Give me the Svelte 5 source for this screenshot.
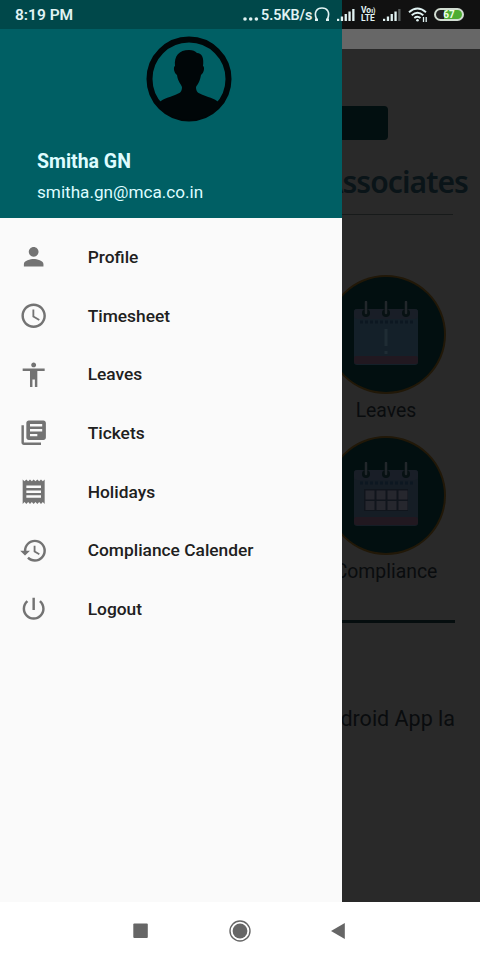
<script>
  const items = [
    { label: 'Profile', d: 'M12 12c2.21 0 4-1.79 4-4s-1.79-4-4-4-4 1.79-4 4 1.79 4 4 4zm0 2c-2.67 0-8 1.34-8 4v2h16v-2c0-2.66-5.33-4-8-4z' },
    { label: 'Timesheet', d: 'M11.99 2C6.47 2 2 6.48 2 12s4.47 10 9.99 10C17.52 22 22 17.52 22 12S17.52 2 11.99 2zM12 20c-4.42 0-8-3.58-8-8s3.58-8 8-8 8 3.58 8 8-3.58 8-8 8zm.5-13H11v6l5.25 3.15.75-1.23-4.5-2.67z' },
    { label: 'Leaves', d: 'M12 2c1.1 0 2 .9 2 2s-.9 2-2 2-2-.9-2-2 .9-2 2-2zm9 7h-6v13h-2v-6h-2v6H9V9H3V7h18v2z' },
    { label: 'Tickets', d: 'M4 6H2v14c0 1.1.9 2 2 2h14v-2H4V6zm16-4H8c-1.1 0-2 .9-2 2v12c0 1.1.9 2 2 2h12c1.1 0 2-.9 2-2V4c0-1.1-.9-2-2-2zm-1 9H9V9h10v2zm-4 4H9v-2h6v2zm4-8H9V5h10v2z' },
    { label: 'Holidays', d: 'M18 17H6v-2h12v2zm0-4H6v-2h12v2zm0-4H6V7h12v2zM3 22l1.5-1.5L6 22l1.5-1.5L9 22l1.5-1.5L12 22l1.5-1.5L15 22l1.5-1.5L18 22l1.5-1.5L21 22V2l-1.5 1.5L18 2l-1.5 1.5L15 2l-1.5 1.5L12 2l-1.5 1.5L9 2 7.5 3.5 6 2 4.5 3.5 3 2v20z' },
    { label: 'Compliance Calender', d: 'M13 3a9 9 0 0 0-9 9H1l3.89 3.89.07.14L9 12H6c0-3.87 3.13-7 7-7s7 3.13 7 7-3.13 7-7 7c-1.93 0-3.68-.79-4.94-2.06l-1.42 1.42A8.954 8.954 0 0 0 13 21a9 9 0 0 0 0-18zm-1 5v5l4.28 2.54.72-1.21-3.5-2.08V8H12z' },
    { label: 'Logout', d: 'M13 3h-2v10h2V3zm4.83 2.17l-1.42 1.42C17.99 7.86 19 9.81 19 12c0 3.87-3.13 7-7 7s-7-3.13-7-7c0-2.19 1.01-4.14 2.58-5.42L6.17 5.17C4.23 6.82 3 9.26 3 12a9 9 0 0 0 18 0c0-2.74-1.23-5.18-3.17-6.83z' }
  ];
</script>

{#snippet signal(weak)}
  <svg class="signal" width="18" height="13" viewBox="0 0 18 13" fill="currentColor">
    <rect x="0" y="10.8" width="2.2" height="2.2" /><rect x="3.8" y="8.5" width="2.3" height="4.5" />
    <rect x="7.6" y="6" width="2.3" height="7" /><rect x="11.4" y="3.5" width="2.3" height="9.5" />
    <rect x="15.2" y="1" width="2.3" height="12" opacity={weak ? 0.35 : 1} />
  </svg>
{/snippet}

{#snippet calendar(grid)}
  <svg width="66" height="67" viewBox="0 0 66 67">
    <rect x="1" y="8" width="64" height="56" rx="3" fill={grid ? '#151d25' : '#142029'} />
    <rect x="1" y="8" width="64" height="10" rx="3" fill="#191e27" />
    <rect x="1" y="55" width="64" height="8" rx="2" fill="#211820" />
    <path d="M7 21H60" stroke="#0c1721" stroke-width="3" stroke-dasharray="3 2" />
    <g fill="#071113"><circle cx="13" cy="12" r="4" /><circle cx="33" cy="12" r="4" /><circle cx="53" cy="12" r="4" /></g>
    <path d="M13 1V12M33 1V12M53 1V12" stroke="#22272b" stroke-width="2.5" stroke-linecap="round" />
    {#if grid}
      <rect x="11" y="27" width="44" height="22" fill="#10151c" />
      {#each [0, 1, 2, 3] as c}
        <rect x={12.5 + c * 11} y="28.5" width="9" height="9" fill="#26272e" />
        <rect x={12.5 + c * 11} y="39" width="9" height="9" fill="#26272e" />
      {/each}
    {:else}
      <path d="M33 28V45M33 50V53" stroke="#1f2c34" stroke-width="3" />
    {/if}
  </svg>
{/snippet}

<div class="screen">
  <main>
    <div class="toolbar"></div>
    <div class="button"></div>
    <h1>Associates</h1>
    <hr class="thin" />
    <section>
      <div class="tile"><div class="disc">{@render calendar(false)}</div><span>Leaves</span></div>
      <div class="tile"><div class="disc">{@render calendar(true)}</div><span>Compliance</span></div>
    </section>
    <hr class="thick" />
    <p>Android App la</p>
  </main>

  <aside>
    <header>
      <svg class="avatar" width="86" height="86" viewBox="0 0 86 86">
        <circle cx="43" cy="43" r="39.5" fill="none" stroke="#000608" stroke-width="6" />
        <path d="M43 14C33 14 28 20 29 30C27 31 28 37 31 39C32 46 35 48 36 51C36 56 34 57 29 59C22 62 15 63 12 68C20 79 31 84 43 84S66 79 74 68C71 63 64 62 57 59C52 57 50 56 50 51C52 48 54 45 55 39C58 37 59 31 57 30C58 22 56 17 51 17C49 15 47 14 43 14Z" fill="#000608" />
      </svg>
      <strong>Smitha GN</strong>
      <span>smitha.gn@mca.co.in</span>
    </header>
    <nav>
      {#each items as item}
        <a href="#top">
          <svg width="29.33" height="29.33" viewBox="0 0 24 24" fill="#737373"><path d={item.d} /></svg>
          <span>{item.label}</span>
        </a>
      {/each}
    </nav>
  </aside>

  <div class="status">
    <time>8:19 PM</time>
    <div class="indicators">
      <svg class="dots" width="16" height="4" viewBox="0 0 16 4" fill="currentColor"><circle cx="2" cy="2" r="1.8" /><circle cx="7.7" cy="2" r="1.8" /><circle cx="13.4" cy="2" r="1.8" /></svg>
      <b>5.5KB/s</b>
      <svg class="phones" width="16" height="15" viewBox="0 0 16 15" fill="none" stroke="currentColor" stroke-width="1.6"><path d="M2.5 12C-.5 5 3 1 8 1S16.5 5 13.5 12" /><path d="M1 12.8H4M12 12.8H15" stroke-width="2.6" /></svg>
      {@render signal(false)}
      <span class="volte"><i>Vo<small>ı)</small></i><i>LTE</i></span>
      {@render signal(true)}
      <svg class="wifi" width="20" height="16" viewBox="0 0 20 16" fill="none" stroke="currentColor" stroke-width="1.9"><path d="M1 5.2Q9.5-2.2 18 5.2M3.7 8.2Q9.5 3.2 15.3 8.2M6.3 11Q9.5 8.5 12.5 11" /><circle cx="9.5" cy="13.3" r="1.3" fill="currentColor" stroke="none" /><path d="M15.5 10V15M18.2 10V15" stroke-width="1.3" /></svg>
      <span class="battery"><em>67</em></span>
    </div>
  </div>

  <footer>
    <svg width="480" height="58" viewBox="0 0 480 58" fill="#666">
      <rect x="133.3" y="21.5" width="14.5" height="14.5" rx="1" />
      <circle cx="240" cy="29" r="7.4" />
      <circle cx="240" cy="29" r="10" fill="none" stroke="#666" stroke-width="1.4" />
      <path d="M331 29L344.8 21V37Z" />
    </svg>
  </footer>
</div>

<style>
  :global(body) { margin: 0; }
  .screen { position: relative; width: 480px; height: 960px; overflow: hidden; display: flex; flex-direction: column; font-family: Roboto, sans-serif; background: #292929; }
  main { box-sizing: border-box; height: 902px; padding-top: 29px; display: flex; flex-direction: column; flex: none; color: #090c0e; }
  .toolbar { height: 20px; background: #676767; }
  .button { width: 296px; height: 34px; margin: 57px auto 0 92px; border-radius: 4px; background: #020f10; }
  h1 { margin: 22px 12px 0 0; height: 40px; text-align: right; font: 600 30px/40px "Noto Sans", sans-serif; letter-spacing: -0.9px; color: #0a1418; }
  hr { border: 0; margin: 0; width: 428px; flex: none; }
  .thin { height: 1px; margin: 12px 0 0 25px; background: #171a1a; }
  section { display: flex; flex-direction: column; align-items: flex-end; margin: 60px 34px 0 0; }
  .tile { width: 120px; height: 160.5px; display: flex; flex-direction: column; align-items: center; }
  .disc { box-sizing: border-box; width: 120px; height: 119px; flex: none; border-radius: 50%; border: 2px solid #211808; background: #020f10; display: flex; align-items: center; justify-content: center; }
  .tile span { margin-top: 3px; font-size: 19.4px; line-height: 28px; }
  .thick { height: 3px; margin: 24px 0 0 27px; background: #050d0e; }
  p { margin: 82px 25px 0 0; font-size: 21.5px; line-height: 28px; text-align: right; }
  aside { position: absolute; left: 0; top: 0; width: 342px; height: 902px; background: #fafafa; }
  header { box-sizing: border-box; height: 218px; padding: 36px 37px 0; display: flex; flex-direction: column; background: #005f64; color: #defcff; }
  .avatar { margin-left: 109px; flex: none; }
  header strong { margin-top: 28px; font-size: 19.5px; line-height: 24px; font-weight: 700; }
  header span { margin-top: 7px; font-size: 17.15px; line-height: 22px; }
  nav { padding-top: 9.7px; }
  a { height: 58.67px; display: flex; align-items: center; padding-left: 19.2px; color: #202020; text-decoration: none; font-size: 17.35px; font-weight: 500; }
  a span { margin-left: 39.2px; }
  .status { position: absolute; left: 0; top: 0; box-sizing: border-box; width: 480px; height: 29px; padding: 0 16px 0 15px; display: flex; align-items: center; justify-content: space-between; background: linear-gradient(90deg, #00484a 342px, #111 342px); color: #e1f3f3; }
  time { font-size: 15.5px; font-weight: 600; line-height: 29px; padding-top: 2px; }
  .indicators { display: flex; align-items: center; height: 29px; }
  .dots { margin: 8px 2px 0 0; }
  .indicators b { font-size: 14.3px; font-weight: 600; width: 52px; white-space: nowrap; }
  .phones { margin-left: 1px; }
  .signal { margin-left: 7px; display: block; }
  .volte { display: flex; flex-direction: column; margin-left: 6px; width: 15px; }
  .volte i { font: 700 8.5px/7.5px Roboto, sans-serif; white-space: nowrap; }
  .volte small { font-size: 7px; }
  .wifi { margin-left: 7px; }
  .battery { box-sizing: border-box; width: 30px; height: 13px; margin-left: 6px; border: 2px solid #d2ddd2; border-radius: 7px; background: linear-gradient(90deg, #222 30%, #4dad32 30%); display: flex; align-items: center; justify-content: center; }
  .battery em { font: 700 10px/10px Roboto, sans-serif; color: #efffea; }
  footer { height: 58px; background: #fff; }
  footer svg { display: block; }
</style>
